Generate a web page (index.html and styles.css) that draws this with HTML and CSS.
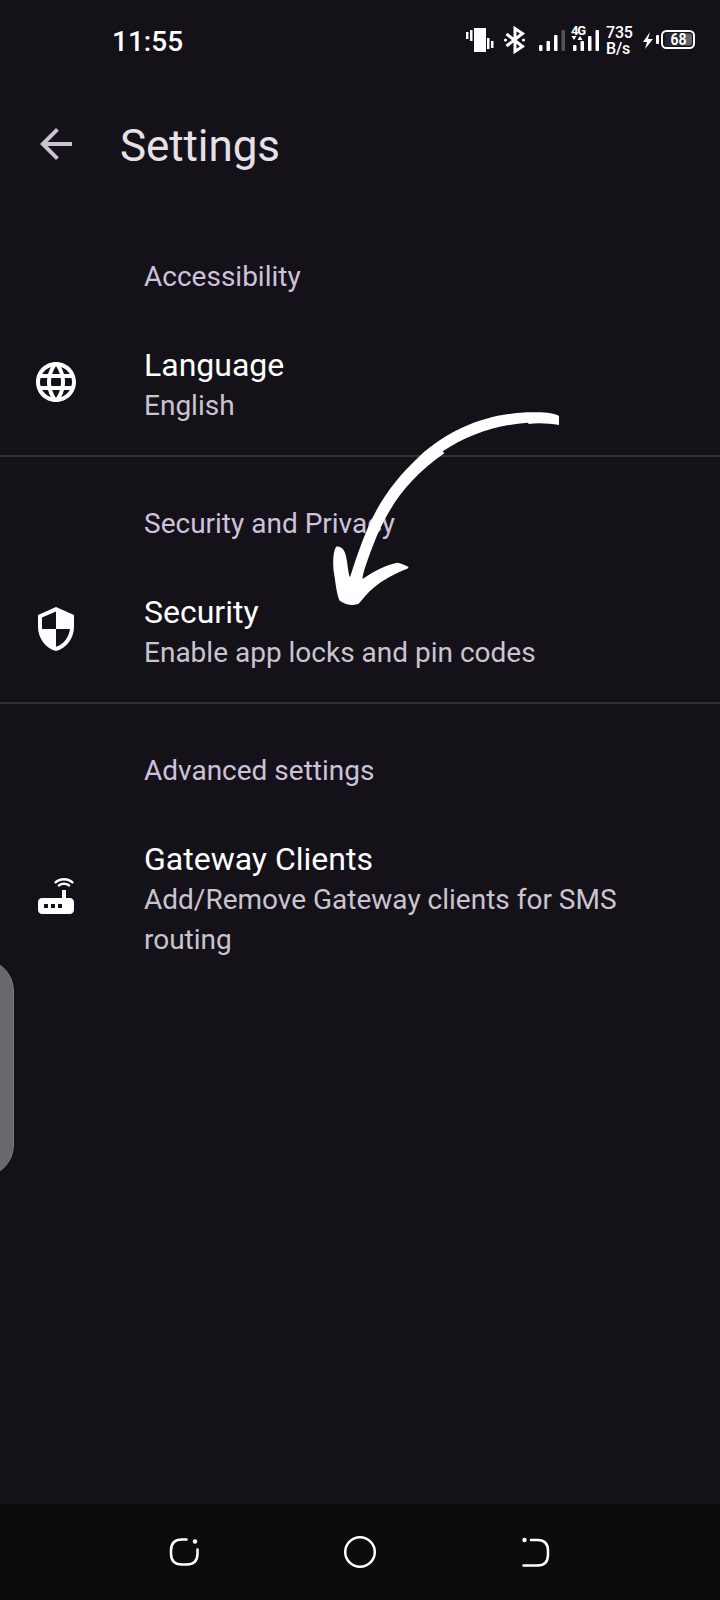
FILE: index.html
```html
<!DOCTYPE html>
<html lang="en">
<head>
<meta charset="utf-8">
<title>Settings</title>
<link rel="stylesheet" href="styles.css">
</head>
<body>
<div class="screen">
  <header class="status">
    <span class="clock">11:55</span>
    <svg class="status-icons" width="136" height="40" viewBox="0 0 136 40" fill="#fff">
      <path d="M0 12h2.500v7H0zM4 10h2.500v11H4zM8 8h12v24H8zM21 18h2.500v11h-2.500zM25 21h2.500v7h-2.500z"/>
      <path d="M40.500 14l16 12.500-7.500 5v-23l7.500 5-16 12.500" fill="none" stroke="#fff" stroke-width="3"/>
      <circle cx="39.500" cy="20" r="1.600"/><circle cx="57.500" cy="20" r="1.600"/>
      <rect x="73" y="25" width="3.500" height="6" rx="1"/><rect x="80.500" y="21" width="3.500" height="10" rx="1"/><rect x="88" y="15" width="3.500" height="16" rx="1"/><rect x="95.500" y="10" width="3.500" height="21" rx="1" fill="#55535a"/>
      <rect x="107" y="25" width="3.500" height="6" rx="1"/><rect x="114.500" y="21" width="3.500" height="10" rx="1"/><rect x="122" y="16" width="3.500" height="15" rx="1"/><rect x="129.500" y="10" width="3.500" height="21" rx="1"/>
      <path d="M105.500 16h5l-2.500 4zM111.500 20l2.500-4 2.500 4z"/>
      <text class="network" x="105" y="14.500" textLength="15">4G</text>
    </svg>
    <span class="speed">735<br>B/s</span>
    <svg class="battery" width="54" height="30" viewBox="0 0 54 30">
      <path d="M7 7L0 17h4l-2 7 8-10H5z" fill="#fff"/>
      <rect x="13" y="10" width="3" height="9" rx="1" fill="#fff"/>
      <rect x="19" y="6" width="32" height="17" rx="4.500" fill="none" stroke="#fff" stroke-width="2"/>
      <path d="M23 8.500h24q2 0 2 2v8q0 2-2 2H23z" fill="#66646a"/>
      <path d="M22 8.500h20v12H22z" fill="#29272e"/>
      <text class="charge" x="27.500" y="20.300" textLength="16" lengthAdjust="spacingAndGlyphs">68</text>
    </svg>
  </header>

  <div class="toolbar">
    <svg class="icon back" viewBox="0 0 24 24"><path d="M20 11H7.830l5.590-5.590L12 4l-8 8 8 8 1.410-1.410L7.830 13H20v-2z"/></svg>
    <h1 class="title">Settings</h1>
  </div>

  <main class="list">
    <section class="group">
      <h2 class="category">Accessibility</h2>
      <div class="item">
        <svg class="icon" viewBox="0 0 24 24"><path d="M11.990 2C6.470 2 2 6.480 2 12s4.470 10 9.990 10C17.520 22 22 17.520 22 12S17.520 2 11.990 2zm6.930 6h-2.950c-.32-1.250-.78-2.450-1.380-3.560 1.840.63 3.370 1.910 4.330 3.560zM12 4.040c.83 1.200 1.480 2.530 1.910 3.960h-3.820c.43-1.430 1.080-2.760 1.910-3.960zM4.260 14C4.100 13.360 4 12.690 4 12s.1-1.360.26-2h3.380c-.08.66-.14 1.320-.14 2s.06 1.340.14 2H4.260zm.82 2h2.950c.32 1.250.78 2.450 1.380 3.560-1.840-.63-3.370-1.900-4.330-3.560zm2.950-8H5.080c.96-1.660 2.490-2.930 4.330-3.560C8.810 5.550 8.350 6.750 8.030 8zM12 19.960c-.83-1.200-1.480-2.530-1.910-3.960h3.820c-.43 1.430-1.080 2.760-1.910 3.960zM14.340 14H9.660c-.09-.66-.16-1.320-.16-2s.07-1.350.16-2h4.680c.09.65.16 1.320.16 2s-.07 1.340-.16 2zm.25 5.560c.6-1.110 1.060-2.310 1.380-3.560h2.950c-.96 1.650-2.490 2.930-4.330 3.560zM16.360 14c.08-.66.14-1.320.14-2s-.06-1.340-.14-2h3.380c.16.64.26 1.310.26 2s-.1 1.360-.26 2h-3.380z"/></svg>
        <div class="text"><p class="name">Language</p><p class="summary">English</p></div>
      </div>
    </section>
    <section class="group">
      <h2 class="category">Security and Privacy</h2>
      <div class="item">
        <svg class="icon" viewBox="0 0 24 24"><path d="M12 1L3 5v6c0 5.550 3.840 10.740 9 12 5.160-1.260 9-6.450 9-12V5l-9-4zm0 10.990h7c-.53 4.120-3.280 7.790-7 8.940V12H5V6.300l7-3.110v8.800z"/></svg>
        <div class="text"><p class="name">Security</p><p class="summary">Enable app locks and pin codes</p></div>
      </div>
    </section>
    <section class="group">
      <h2 class="category">Advanced settings</h2>
      <div class="item">
        <svg class="icon" viewBox="0 0 24 24"><path d="M20.200 5.900l.8-.8C19.600 3.700 17.800 3 16 3s-3.600.7-5 2.100l.8.8C13 4.800 14.500 4.200 16 4.200s3 .6 4.200 1.700zm-.9.8c-.9-.9-2.100-1.400-3.300-1.400s-2.400.5-3.300 1.400l.8.8c.7-.7 1.600-1 2.500-1 .9 0 1.800.3 2.500 1l.8-.8zM19 13h-2V9h-2v4H5c-1.100 0-2 .9-2 2v4c0 1.100.9 2 2 2h14c1.100 0 2-.9 2-2v-4c0-1.100-.9-2-2-2zM8 18H6v-2h2v2zm3.500 0h-2v-2h2v2zm3.500 0h-2v-2h2v2z"/></svg>
        <div class="text"><p class="name">Gateway Clients</p><p class="summary">Add/Remove Gateway clients for SMS routing</p></div>
      </div>
    </section>
  </main>

  <nav class="navbar">
    <svg width="34" height="34" viewBox="0 0 34 34"><path d="M19.500 4.500H15Q4 4.500 4 15.500v3Q4 29.500 15 29.500h4.500Q30.500 29.500 30.500 18.500V14.500"/><circle class="dot" cx="28" cy="6.500" r="2.200"/></svg>
    <svg width="34" height="34" viewBox="0 0 34 34"><circle cx="17" cy="17" r="14.800"/></svg>
    <svg width="34" height="34" viewBox="0 0 34 34"><path d="M12 5H18.500Q29 5 29 16v3.500Q29 30.500 18.500 30.500H4.500"/><circle class="dot" cx="5.500" cy="5" r="2.200"/></svg>
  </nav>

  <div class="edge-handle"></div>
  <svg class="pointer" viewBox="0 0 780 690"><path d="M717 78C705 70 675 66 640 67C515 67 395 110 297 200C230 262 180 330 145 410C120 468 105 515 90 562C83 550 83 500 72 482C67 473 57 469 48 470C38 488 38 525 42 550C47 580 50 615 59 632C72 641 88 646 99 645L115 642C130 626 142 608 160 594C190 568 225 550 262 536L266 531C256 525 244 520 232 518C200 524 160 544 128 567C125 555 157 470 174 430C217 335 272 260 373 190L368 184C440 136 530 104 624 98L626 102C655 98 690 101 717 105Z"/></svg>
</div>
</body>
</html>
```
FILE: styles.css
```css
* { box-sizing: border-box; }
body { margin: 0; background: #141218; font-family: Roboto, sans-serif; }
.screen { position: relative; width: 720px; height: 1600px; display: flex; flex-direction: column; overflow: hidden; background: #141218; color: #fff; }
h1, h2, p { margin: 0; font-weight: 400; }

.status { height: 80px; display: flex; align-items: center; padding: 0 23px 0 112px; }
.clock { flex: none; width: 354px; font-size: 28px; font-weight: 500; line-height: 32px; padding-top: 4px; }
.status-icons { flex: none; }
.speed { flex: none; width: 40px; margin-left: 4px; padding-top: 2px; font-size: 16px; line-height: 16px; font-weight: 500; letter-spacing: -0.2px; }
.battery { flex: none; margin-left: -3px; }
.network { font: 700 13px Roboto, sans-serif; }
.charge { font: 700 16px Roboto, sans-serif; fill: #fff; }

.toolbar { height: 128px; display: flex; align-items: center; gap: 40px; padding-left: 32px; }
.icon { flex: none; width: 48px; height: 48px; fill: #fff; }
.back { fill: #cac4d0; }
.title { font-size: 44px; line-height: 52px; letter-spacing: -0.1px; color: #e6e0e9; padding-top: 4px; }

.list { flex: 1; padding-top: 2px; }
.group { height: 247px; }
.group:not(:last-child) { border-bottom: 2px solid #322f37; }
.category { height: 117px; padding: 50px 0 0 144px; font-size: 28px; line-height: 34px; color: #ccc2dc; }
.item { display: flex; align-items: center; padding: 15px 64px 0 32px; gap: 64px; }
.text { padding-top: 3px; margin-bottom: -4px; }
.name { font-size: 32px; line-height: 40px; }
.summary { padding-top: 1px; font-size: 28px; line-height: 40px; color: #cac4d0; }

.navbar { height: 96px; display: flex; justify-content: center; align-items: center; gap: 142px; background: #0c0c0e; }
.navbar svg { fill: none; stroke: #fff; stroke-width: 2.5; stroke-linecap: round; }
.navbar .dot { fill: #fff; stroke: none; }

.edge-handle { position: absolute; left: -56px; top: 959px; width: 69.500px; height: 218px; border-radius: 32px; background: #69686d; border: 1px solid #77767b; }
.pointer { position: absolute; left: 320px; top: 390px; width: 260px; height: 230px; fill: #fff; }
```
